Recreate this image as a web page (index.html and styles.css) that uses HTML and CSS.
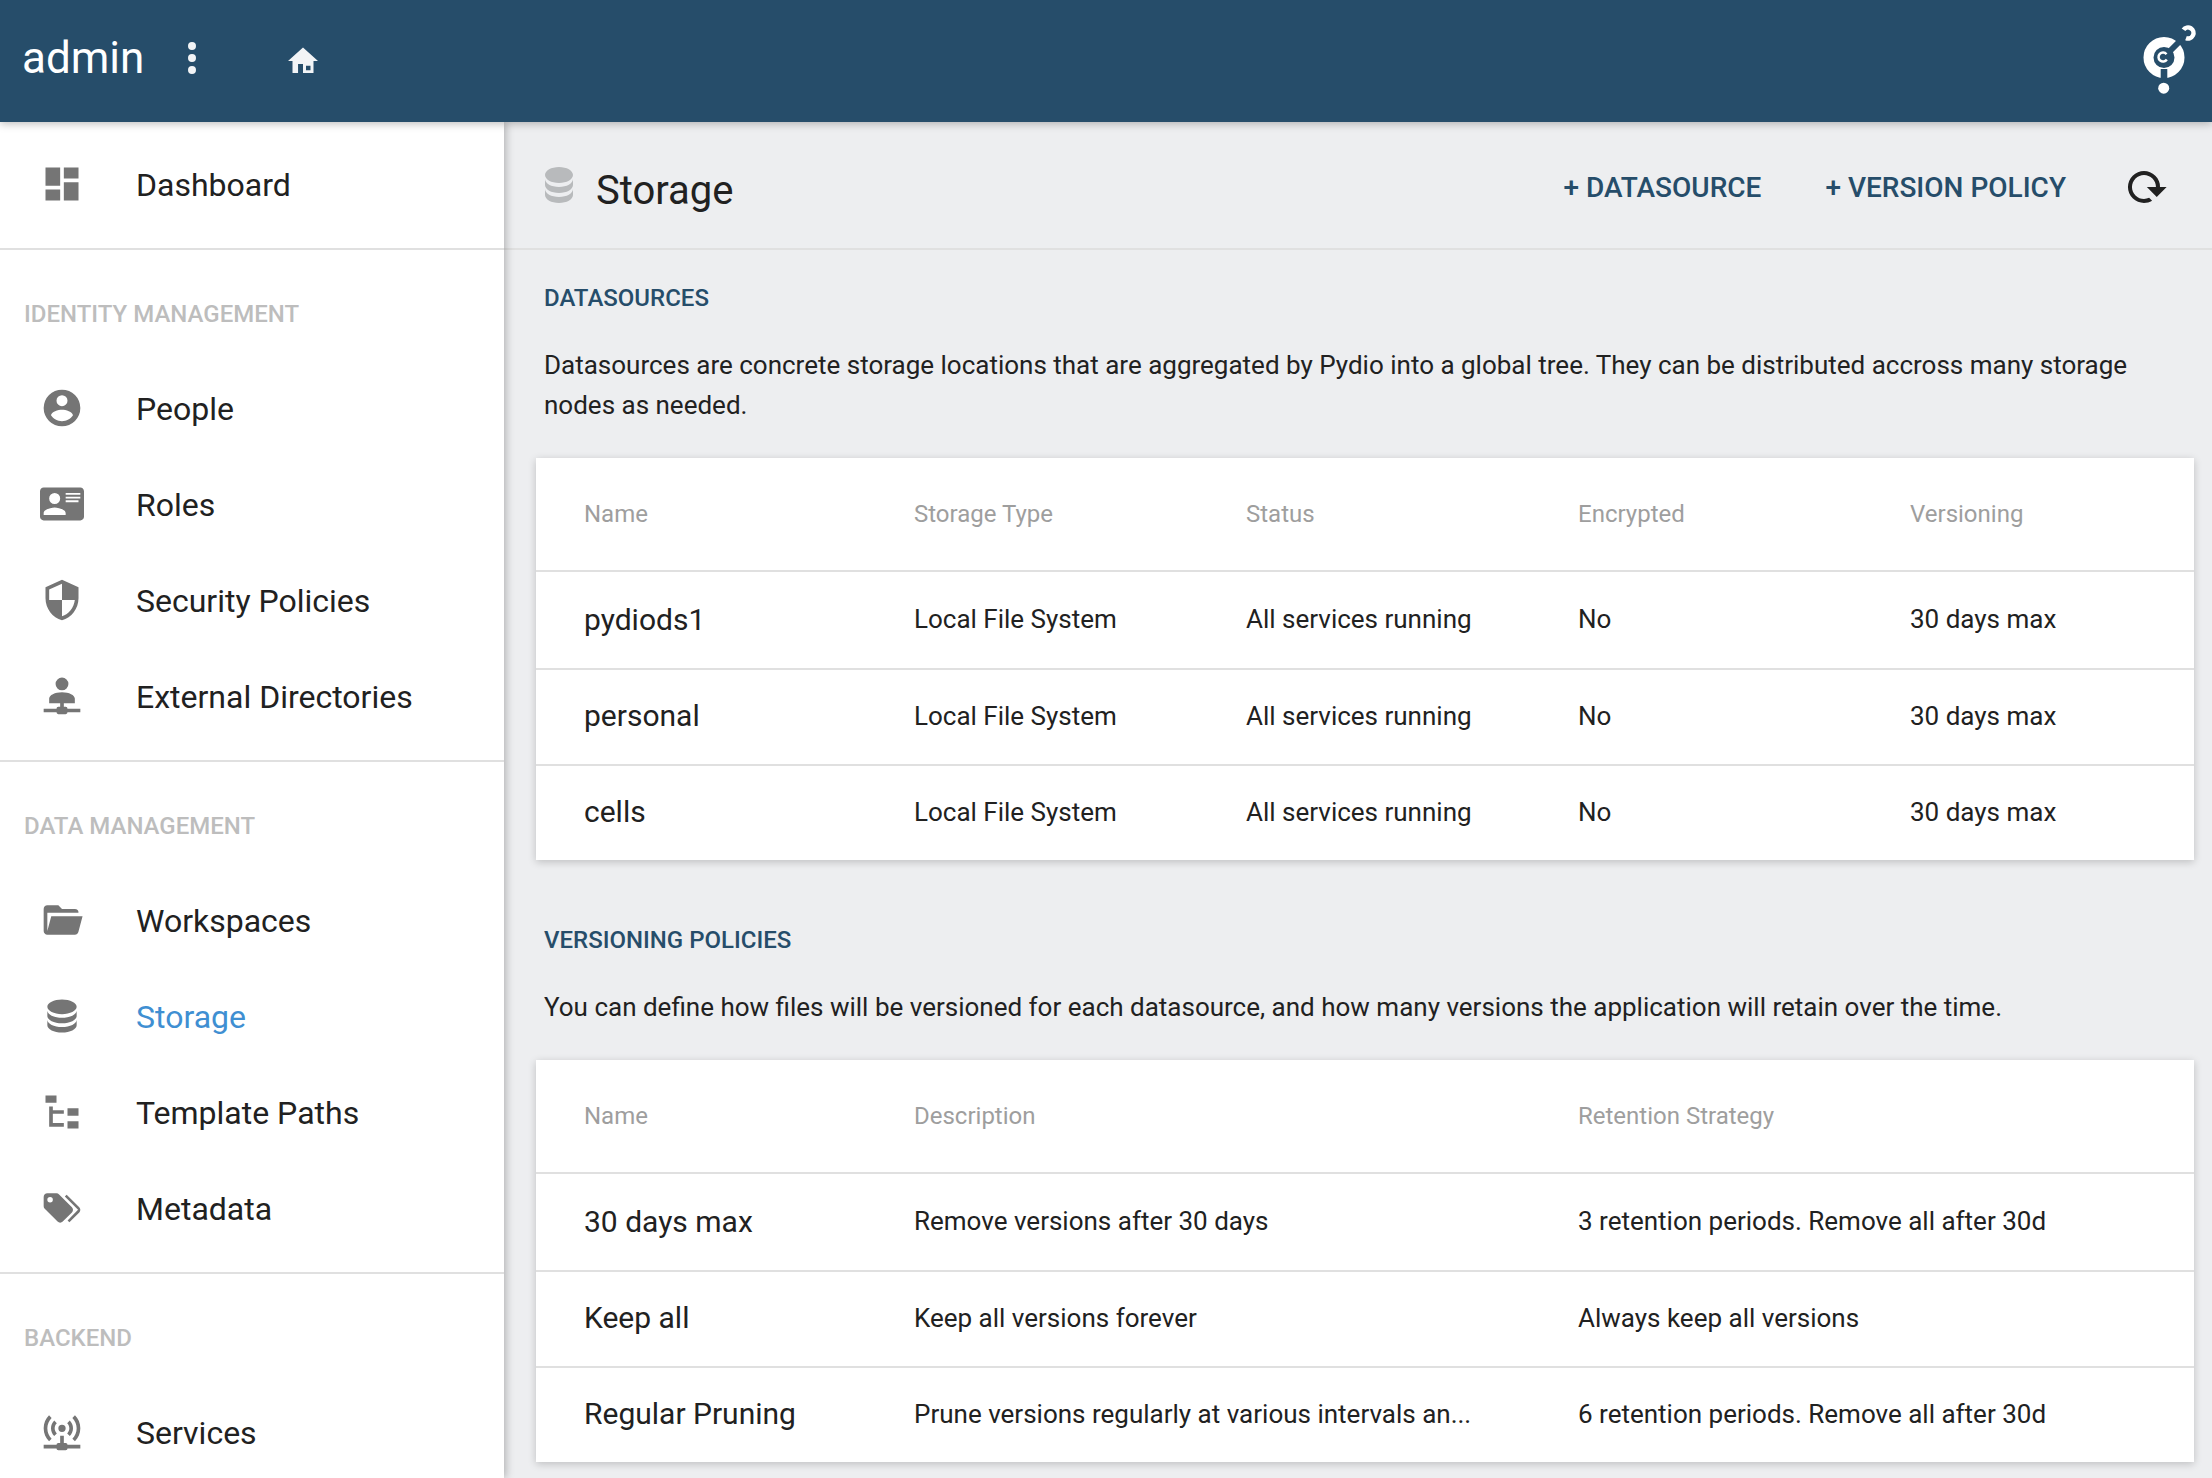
FILE: index.html
```html
<!DOCTYPE html>
<html lang="en">
<head>
    <meta charset="UTF-8">
    <title>Storage</title>
    <link rel="stylesheet" href="styles.css">
</head>
<body>
    <header class="topbar">
        <span class="username">admin</span>
        <svg class="icon-dots" viewBox="0 0 24 24"><path d="M12,16A2,2 0 0,1 14,18A2,2 0 0,1 12,20A2,2 0 0,1 10,18A2,2 0 0,1 12,16M12,10A2,2 0 0,1 14,12A2,2 0 0,1 12,14A2,2 0 0,1 10,12A2,2 0 0,1 12,10M12,4A2,2 0 0,1 14,6A2,2 0 0,1 12,8A2,2 0 0,1 10,6A2,2 0 0,1 12,4Z"/></svg>
        <svg class="icon-home" viewBox="0 0 24 24"><path fill-rule="evenodd" d="M12,3L2,12H5V20H8.7V14H12V20H19V12H22L12,3ZM14,15.2H17V18.1H14V15.2Z"/></svg>
        <svg class="logo" viewBox="0 0 60 80">
            <circle cx="24" cy="36.5" r="15.5" fill="none" stroke="#fff" stroke-width="10"/>
            <path d="M24,36L44,16" stroke="#264d6a" stroke-width="6"/>
            <path d="M20.7,48V58H27.3V48Z" fill="#264d6a"/>
            <path d="M26.5,33.2A4.5,4.5 0 1,0 26.8,38.5" fill="none" stroke="#fff" stroke-width="2.5"/>
            <circle cx="23.7" cy="67.2" r="5.5" fill="#fff"/>
            <path d="M43.5,8.8A5.5,5.5 0 1,1 46,17.1" fill="none" stroke="#fff" stroke-width="4.5"/>
        </svg>
    </header>

    <div class="layout">
        <nav class="sidebar">
            <div class="nav-group nav-first">
                <a class="nav-item">
                    <svg viewBox="0 0 24 24"><path d="M13,3V9H21V3M13,21H21V11H13M3,21H11V15H3M3,13H11V3H3V13Z"/></svg>
                    <span>Dashboard</span>
                </a>
            </div>
            <div class="nav-group">
                <div class="nav-label">IDENTITY MANAGEMENT</div>
                <a class="nav-item">
                    <svg viewBox="0 0 24 24"><path d="M12,19.2C9.5,19.2 7.29,17.92 6,16C6.03,14 10,12.9 12,12.9C14,12.9 17.97,14 18,16C16.71,17.92 14.5,19.2 12,19.2M12,5A3,3 0 0,1 15,8A3,3 0 0,1 12,11A3,3 0 0,1 9,8A3,3 0 0,1 12,5M12,2A10,10 0 0,0 2,12A10,10 0 0,0 12,22A10,10 0 0,0 22,12A10,10 0 0,0 12,2Z"/></svg>
                    <span>People</span>
                </a>
                <a class="nav-item">
                    <svg viewBox="0 0 24 24"><path d="M2,3H22C23.05,3 24,3.95 24,5V19C24,20.05 23.05,21 22,21H2C0.95,21 0,20.05 0,19V5C0,3.95 0.95,3 2,3M14,6V7H22V6H14M14,8V9H21.5L22,9V8H14M14,10V11H21V10H14M8,13.91C6,13.91 2,15 2,17V18H14V17C14,15 10,13.91 8,13.91M8,6A3,3 0 0,0 5,9A3,3 0 0,0 8,12A3,3 0 0,0 11,9A3,3 0 0,0 8,6Z"/></svg>
                    <span>Roles</span>
                </a>
                <a class="nav-item">
                    <svg viewBox="0 0 24 24"><path d="M12,12H19C18.47,16.11 15.72,19.78 12,20.92V12H5V6.3L12,3.19M12,1L3,5V11C3,16.55 6.84,21.73 12,23C17.16,21.73 21,16.55 21,11V5L12,1Z"/></svg>
                    <span>Security Policies</span>
                </a>
                <a class="nav-item">
                    <svg class="icon-up" viewBox="0 0 24 24"><path d="M13,17V19H14A1,1 0 0,1 15,20H22V22H15A1,1 0 0,1 14,23H10A1,1 0 0,1 9,22H2V20H9A1,1 0 0,1 10,19H11V17H5V14.5C5,12.57 8.13,11 12,11C15.87,11 19,12.57 19,14.5V17H13M12,3A3.5,3.5 0 0,1 15.5,6.5A3.5,3.5 0 0,1 12,10A3.5,3.5 0 0,1 8.5,6.5A3.5,3.5 0 0,1 12,3Z"/></svg>
                    <span>External Directories</span>
                </a>
            </div>
            <div class="nav-group">
                <div class="nav-label">DATA MANAGEMENT</div>
                <a class="nav-item">
                    <svg viewBox="0 0 24 24"><path d="M19,20H4C2.89,20 2,19.1 2,18V6C2,4.89 2.89,4 4,4H10L12,6H19A2,2 0 0,1 21,8H21L4,8V18L6.14,10H23.21L20.93,18.5C20.7,19.37 19.92,20 19,20Z"/></svg>
                    <span>Workspaces</span>
                </a>
                <a class="nav-item nav-active">
                    <svg viewBox="0 0 24 24"><path d="M12,3C7.58,3 4,4.79 4,7C4,9.21 7.58,11 12,11C16.42,11 20,9.21 20,7C20,4.79 16.42,3 12,3M4,9V12C4,14.21 7.58,16 12,16C16.42,16 20,14.21 20,12V9C20,11.21 16.42,13 12,13C7.58,13 4,11.21 4,9M4,14V17C4,19.21 7.58,21 12,21C16.42,21 20,19.21 20,17V14C20,16.21 16.42,18 12,18C7.58,18 4,16.21 4,14Z"/></svg>
                    <span>Storage</span>
                </a>
                <a class="nav-item">
                    <svg viewBox="0 0 24 24"><path d="M3,3H9V7H3V3M15,10H21V14H15V10M15,17H21V21H15V17M13,13H7V18H13V20H7L5,20V9H7V11H13V13Z"/></svg>
                    <span>Template Paths</span>
                </a>
                <a class="nav-item">
                    <svg viewBox="0 0 24 24"><path d="M5.5,9A1.5,1.5 0 0,0 7,7.5A1.5,1.5 0 0,0 5.5,6A1.5,1.5 0 0,0 4,7.5A1.5,1.5 0 0,0 5.5,9M17.41,11.58C17.77,11.94 18,12.44 18,13C18,13.55 17.78,14.05 17.41,14.41L12.41,19.41C12.05,19.77 11.55,20 11,20C10.45,20 9.95,19.78 9.58,19.41L2.59,12.42C2.22,12.05 2,11.55 2,11V6C2,4.89 2.89,4 4,4H9C9.55,4 10.05,4.22 10.41,4.58L17.41,11.58M13.54,5.71L14.54,4.71L21.41,11.58C21.78,11.94 22,12.45 22,13C22,13.55 21.78,14.05 21.42,14.41L16.04,19.79L15.04,18.79L20.75,13L13.54,5.71Z"/></svg>
                    <span>Metadata</span>
                </a>
            </div>
            <div class="nav-group">
                <div class="nav-label">BACKEND</div>
                <a class="nav-item">
                    <svg viewBox="0 0 24 24"><path d="M4.93,2.93C3.12,4.74 2,7.24 2,10C2,12.76 3.12,15.26 4.93,17.07L6.34,15.66C4.89,14.22 4,12.22 4,10C4,7.79 4.89,5.79 6.34,4.34L4.93,2.93M19.07,2.93L17.66,4.34C19.11,5.78 20,7.78 20,10C20,12.22 19.11,14.22 17.66,15.66L19.07,17.07C20.88,15.26 22,12.76 22,10C22,7.24 20.88,4.74 19.07,2.93M7.76,5.76C6.67,6.85 6,8.35 6,10C6,11.65 6.67,13.15 7.76,14.24L9.17,12.83C8.45,12.11 8,11.11 8,10C8,8.89 8.45,7.89 9.17,7.17L7.76,5.76M16.24,5.76L14.83,7.17C15.55,7.89 16,8.89 16,10C16,11.11 15.55,12.11 14.83,12.83L16.24,14.24C17.33,13.15 18,11.65 18,10C18,8.35 17.33,6.85 16.24,5.76M12,8A2,2 0 0,0 10,10A2,2 0 0,0 12,12A2,2 0 0,0 14,10A2,2 0 0,0 12,8M11,14V18H10A1,1 0 0,0 9,19H2V21H9A1,1 0 0,0 10,22H14A1,1 0 0,0 15,21H22V19H15A1,1 0 0,0 14,18H13V14H11Z"/></svg>
                    <span>Services</span>
                </a>
            </div>
        </nav>

        <main class="content">
            <div class="titlebar">
                <svg class="title-icon" viewBox="0 0 24 24" preserveAspectRatio="none"><path d="M12,3C7.58,3 4,4.79 4,7C4,9.21 7.58,11 12,11C16.42,11 20,9.21 20,7C20,4.79 16.42,3 12,3M4,9V12C4,14.21 7.58,16 12,16C16.42,16 20,14.21 20,12V9C20,11.21 16.42,13 12,13C7.58,13 4,11.21 4,9M4,14V17C4,19.21 7.58,21 12,21C16.42,21 20,19.21 20,17V14C20,16.21 16.42,18 12,18C7.58,18 4,16.21 4,14Z"/></svg>
                <h1>Storage</h1>
                <div class="actions">
                    <a class="action">+ DATASOURCE</a>
                    <a class="action">+ VERSION POLICY</a>
                    <svg class="icon-reload" viewBox="0 0 24 24"><path d="M19,12H22.32L17.37,16.95L12.42,12H16.97C17,10.46 16.42,8.93 15.24,7.76C12.9,5.41 9.1,5.41 6.76,7.76C4.42,10.1 4.42,13.9 6.76,16.24C8.6,18.08 11.36,18.47 13.58,17.41L15.05,18.88C12,20.69 8,20.29 5.34,17.66C2.22,14.53 2.22,9.47 5.34,6.34C8.47,3.22 13.53,3.22 16.66,6.34C18.32,8 19.1,10 19,12Z"/></svg>
                </div>
            </div>

            <section class="panel panel-first">
                <h2>DATASOURCES</h2>
                <p>Datasources are concrete storage locations that are aggregated by Pydio into a global tree. They can be distributed accross many storage nodes as needed.</p>
                <table class="card">
                    <colgroup><col class="col-a"><col class="col-b"><col class="col-b"><col class="col-b"><col></colgroup>
                    <thead>
                        <tr><th>Name</th><th>Storage Type</th><th>Status</th><th>Encrypted</th><th>Versioning</th></tr>
                    </thead>
                    <tbody>
                        <tr><td class="name">pydiods1</td><td>Local File System</td><td>All services running</td><td>No</td><td>30 days max</td></tr>
                        <tr><td class="name">personal</td><td>Local File System</td><td>All services running</td><td>No</td><td>30 days max</td></tr>
                        <tr><td class="name">cells</td><td>Local File System</td><td>All services running</td><td>No</td><td>30 days max</td></tr>
                    </tbody>
                </table>
            </section>

            <section class="panel">
                <h2>VERSIONING POLICIES</h2>
                <p>You can define how files will be versioned for each datasource, and how many versions the application will retain over the time.</p>
                <table class="card">
                    <colgroup><col class="col-a"><col class="col-c"><col></colgroup>
                    <thead>
                        <tr><th>Name</th><th>Description</th><th>Retention Strategy</th></tr>
                    </thead>
                    <tbody>
                        <tr><td class="name">30 days max</td><td>Remove versions after 30 days</td><td>3 retention periods. Remove all after 30d</td></tr>
                        <tr><td class="name">Keep all</td><td>Keep all versions forever</td><td>Always keep all versions</td></tr>
                        <tr><td class="name">Regular Pruning</td><td>Prune versions regularly at various intervals an...</td><td>6 retention periods. Remove all after 30d</td></tr>
                    </tbody>
                </table>
            </section>
        </main>
    </div>
</body>
</html>
```

FILE: styles.css
```css
html, body {
    margin: 0;
    height: 100%;
    overflow: hidden;
}
body {
    font-family: Roboto, "Liberation Sans", sans-serif;
    background-color: #edeef0;
    color: #212121;
    display: flex;
    flex-direction: column;
}

/* top bar */
.topbar {
    flex: none;
    height: 122px;
    background-color: #264d6a;
    color: #fff;
    display: flex;
    align-items: center;
    position: relative;
    z-index: 2;
    box-shadow: 0 2px 8px rgba(0, 0, 0, 0.25);
    fill: #f2f4f6;
}
.username {
    margin-left: 22px;
    width: 146px;
    font-size: 44px;
    line-height: 116px;
    height: 122px;
}
.icon-dots {
    width: 48px;
    height: 48px;
    margin-bottom: 6px;
    fill: #f2f4f6;
}
.icon-home {
    width: 36px;
    height: 36px;
    margin-left: 69px;
}
.logo {
    width: 60px;
    height: 80px;
    margin-left: auto;
    margin-right: 12px;
    margin-bottom: 1px;
}

.layout {
    flex: 1;
    display: flex;
    min-height: 0;
}

/* sidebar */
.sidebar {
    flex: none;
    width: 504px;
    background-color: #fff;
    position: relative;
    z-index: 1;
    box-shadow: 2px 0 8px rgba(0, 0, 0, 0.25);
}
.nav-group {
    padding-bottom: 16px;
    border-bottom: 2px solid #e0e0e0;
}
.nav-group:last-child {
    border-bottom: none;
}
.nav-first {
    padding-top: 14px;
}
.nav-label {
    padding: 49px 0 31px 24px;
    font-size: 24px;
    line-height: 30px;
    font-weight: 500;
    color: #bdbdbd;
}
.nav-item {
    height: 96px;
    display: flex;
    align-items: center;
    font-size: 32px;
}
.nav-item span {
    padding-top: 2px;
}
.nav-item svg {
    width: 44px;
    height: 44px;
    margin-left: 40px;
    margin-right: 52px;
    fill: #757575;
}
.nav-item .icon-up {
    margin-bottom: 4px;
}
.nav-active {
    color: #3f8fd2;
}

/* main column */
.content {
    flex: 1;
    min-width: 0;
}
.titlebar {
    height: 126px;
    display: flex;
    align-items: center;
    border-bottom: 2px solid #e0e0e0;
}
.title-icon {
    width: 42px;
    height: 48px;
    margin-left: 34px;
    fill: #b8babc;
}
h1 {
    margin: 10px 0 0 16px;
    font-size: 40px;
    font-weight: 400;
}
.actions {
    margin-left: auto;
    display: flex;
    align-items: center;
    margin-right: 42px;
    margin-top: 4px;
}
.action {
    font-size: 28px;
    font-weight: 500;
    color: #264d6a;
    margin-right: 64px;
}
.action:nth-child(2) {
    margin-right: 56px;
}
.icon-reload {
    width: 48px;
    height: 48px;
    fill: #212121;
}

.panel {
    padding-top: 64px;
}
.panel-first {
    padding-top: 32px;
}
h2 {
    margin: 0;
    padding-left: 40px;
    font-size: 24px;
    line-height: 32px;
    font-weight: 500;
    color: #264d6a;
}
.panel p {
    margin: 31px 24px 33px 40px;
    font-size: 26px;
    line-height: 40px;
}

/* tables */
.card {
    width: 1658px;
    margin-left: 32px;
    table-layout: fixed;
    border-collapse: collapse;
    background-color: #fff;
    box-shadow: 0 2px 8px rgba(0, 0, 0, 0.2);
}
.col-a {
    width: 378px;
}
.col-b {
    width: 332px;
}
.col-c {
    width: 664px;
}
th {
    height: 112px;
    padding: 0;
    text-align: left;
    font-size: 24px;
    font-weight: 400;
    color: #9e9e9e;
}
th:first-child, td:first-child {
    padding-left: 48px;
}
tr {
    border-bottom: 2px solid #e0e0e0;
}
tbody tr:last-child {
    border-bottom: none;
}
td {
    height: 91px;
    padding: 0 0 3px;
    font-size: 26px;
}
tbody tr:first-child td {
    height: 94px;
    padding-bottom: 2px;
}
td.name {
    font-size: 30px;
}
```
